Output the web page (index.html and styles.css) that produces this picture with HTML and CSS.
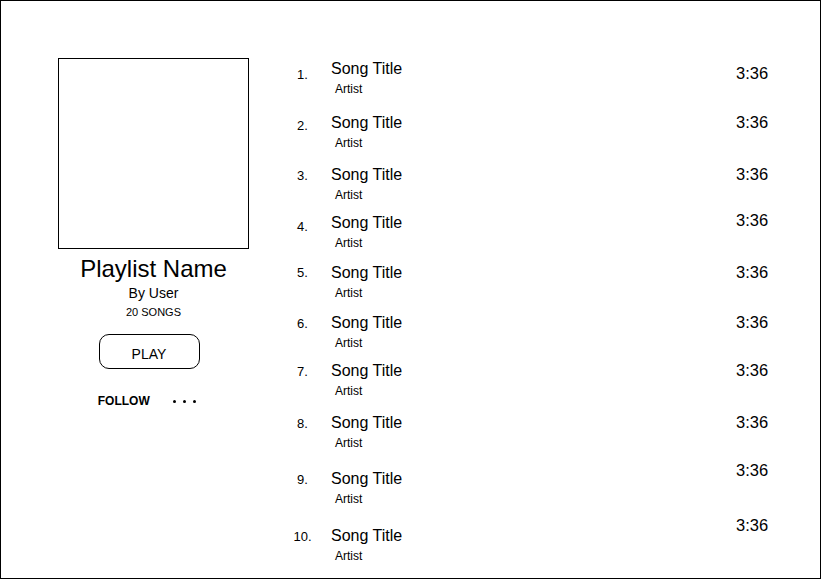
FILE: index.html
```html
<!DOCTYPE html>
<html lang="en">
<head>
<meta charset="utf-8">
<title>Playlist</title>
<link rel="stylesheet" href="styles.css">
</head>
<body>
<div class="frame">
  <aside class="sidebar">
    <div class="cover"></div>
    <h1 class="pl-name">Playlist Name</h1>
    <div class="pl-user">By User</div>
    <div class="pl-count">20 SONGS</div>
    <button class="play">PLAY</button>
    <div class="follow-row">
      <span class="follow">FOLLOW</span>
      <span class="dots"><i></i><i></i><i></i></span>
    </div>
  </aside>
  <ol class="tracks">
    <li class="track r1"><span class="num">1.</span><div class="info"><div class="title">Song Title</div><div class="artist">Artist</div></div><span class="dur">3:36</span></li>
    <li class="track r2"><span class="num">2.</span><div class="info"><div class="title">Song Title</div><div class="artist">Artist</div></div><span class="dur">3:36</span></li>
    <li class="track r3"><span class="num">3.</span><div class="info"><div class="title">Song Title</div><div class="artist">Artist</div></div><span class="dur">3:36</span></li>
    <li class="track r4"><span class="num">4.</span><div class="info"><div class="title">Song Title</div><div class="artist">Artist</div></div><span class="dur">3:36</span></li>
    <li class="track r5"><span class="num">5.</span><div class="info"><div class="title">Song Title</div><div class="artist">Artist</div></div><span class="dur">3:36</span></li>
    <li class="track r6"><span class="num">6.</span><div class="info"><div class="title">Song Title</div><div class="artist">Artist</div></div><span class="dur">3:36</span></li>
    <li class="track r7"><span class="num">7.</span><div class="info"><div class="title">Song Title</div><div class="artist">Artist</div></div><span class="dur">3:36</span></li>
    <li class="track r8"><span class="num">8.</span><div class="info"><div class="title">Song Title</div><div class="artist">Artist</div></div><span class="dur">3:36</span></li>
    <li class="track r9"><span class="num">9.</span><div class="info"><div class="title">Song Title</div><div class="artist">Artist</div></div><span class="dur">3:36</span></li>
    <li class="track r10"><span class="num">10.</span><div class="info"><div class="title">Song Title</div><div class="artist">Artist</div></div><span class="dur">3:36</span></li>
  </ol>
</div>
</body>
</html>
```
FILE: styles.css
```css
* { box-sizing: border-box; }
html, body { margin: 0; padding: 0; background: #fff; }
body {
  font-family: "Liberation Sans", Arial, Helvetica, sans-serif;
  color: #000;
}
.frame {
  width: 821px;
  height: 579px;
  border: 1px solid #000;
  display: flex;
  align-items: flex-start;
  overflow: hidden;
}
.sidebar {
  width: 273px;
  flex: none;
  padding: 57px 0 0 32px;
  display: flex;
  flex-direction: column;
  align-items: center;
}
.cover {
  width: 191px;
  height: 191px;
  border: 1px solid #000;
}
.pl-name {
  margin: 6px 0 0;
  font-size: 24px;
  line-height: 27px;
  font-weight: normal;
}
.pl-user {
  margin-top: 3px;
  font-size: 14px;
  line-height: 16px;
}
.pl-count {
  margin-top: 5px;
  font-size: 11px;
  line-height: 13px;
}
.play {
  margin: 15px 9px 0 0;
  width: 101px;
  height: 35px;
  border: 1px solid #000;
  border-radius: 10px;
  background: #fff;
  font-family: inherit;
  font-size: 14px;
  color: #000;
  padding: 5px 0 0;
  display: flex;
  align-items: center;
  justify-content: center;
}
.follow-row {
  margin: 25px 13px 0 0;
  display: flex;
  align-items: center;
  gap: 23px;
}
.follow {
  font-size: 12px;
  line-height: 14px;
  font-weight: bold;
}
.dots {
  display: flex;
  gap: 6.5px;
  margin-top: 1px;
}
.dots i {
  width: 3.5px;
  height: 3.5px;
  border-radius: 50%;
  background: #000;
}
.tracks {
  flex: 1;
  list-style: none;
  margin: 0;
  padding: 58.5px 0 0;
}
.track {
  display: flex;
  align-items: flex-start;
  margin-top: 14px;
}
.track.r1 { margin-top: 0; }
.track.r2 { margin-top: 18px; }
.track.r3 { margin-top: 16px; }
.track.r4 { margin-top: 12px; }
.track.r7 { margin-top: 12px; }
.track.r8 { margin-top: 16px; }
.track.r9 { margin-top: 20px; }
.track.r10 { margin-top: 21px; }
.num {
  width: 57px;
  flex: none;
  text-align: center;
  font-size: 13px;
  line-height: 15px;
  margin-top: 2px;
}
.r1 .num { margin-top: 7px; }
.r2 .num { margin-top: 4px; }
.r4 .num { margin-top: 5px; }
.r5 .num { margin-top: 1px; }
.r9 .num, .r10 .num { margin-top: 2px; }
.info { flex: 1; }
.title {
  font-size: 16px;
  line-height: 18px;
}
.artist {
  margin-top: 4px;
  padding-left: 4px;
  font-size: 12px;
  line-height: 14px;
}
.dur {
  width: 84px;
  flex: none;
  font-size: 16.5px;
  line-height: 18px;
  margin-top: -1px;
}
.r1 .dur { margin-top: 4px; }
.r4 .dur { margin-top: -3px; }
.r9 .dur { margin-top: -9px; }
.r10 .dur { margin-top: -11px; }
```
